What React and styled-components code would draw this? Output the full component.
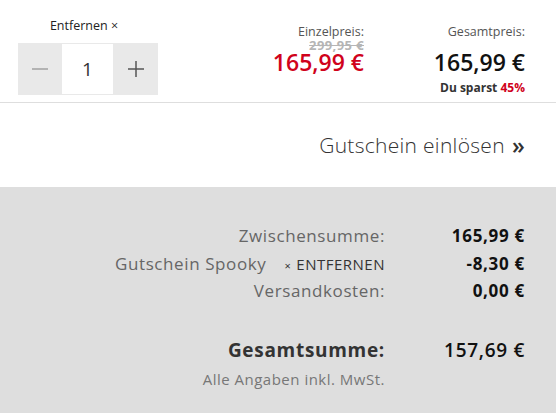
import React from 'react';
import styled, { createGlobalStyle } from 'styled-components';

const GlobalStyle = createGlobalStyle`
  body {
    margin: 0;
    background: #fff;
    font-family: "Open Sans", "Noto Sans", sans-serif;
    color: #333;
  }
`;

const Page = styled.div`
  width: 556px;
  height: 413px;
  overflow: hidden;
  display: flex;
  flex-direction: column;
`;

const ItemRow = styled.div`
  display: flex;
  align-items: flex-start;
  height: 103px;
  box-sizing: border-box;
  border-bottom: 1px solid #dedede;
  padding: 0 31px 0 18px;
`;

const QtyBlock = styled.div`
  display: flex;
  flex-direction: column;
  align-items: center;
  width: 140px;
  padding-top: 16px;
`;

const RemoveLink = styled.span`
  font-size: 12.5px;
  color: #222;
  height: 19px;
  line-height: 19px;
  margin-bottom: 8px;
  margin-left: -8px;
  cursor: pointer;
`;

const Stepper = styled.div`
  display: flex;
  height: 52px;
  width: 140px;
  background: #e9e9e9;
`;

const StepButton = styled.button`
  width: ${({ wide }) => wide}px;
  border: 0;
  background: transparent;
  display: flex;
  align-items: center;
  justify-content: center;
  padding: 0;
  cursor: pointer;
`;

const QtyValue = styled.div`
  flex: 1;
  margin: 1px 0;
  background: #fff;
  display: flex;
  align-items: center;
  justify-content: center;
  font-size: 19px;
  color: #333;
`;

const PriceCol = styled.div`
  display: flex;
  flex-direction: column;
  align-items: flex-end;
  margin-left: auto;
  padding-top: 25px;
`;

const TotalCol = styled(PriceCol)`
  margin-left: 0;
  width: 161px;
`;

const ColLabel = styled.span`
  font-size: 12.5px;
  color: #555;
  line-height: 14px;
`;

const OldPrice = styled.span`
  font-size: 13px;
  font-weight: 700;
  letter-spacing: 0.4px;
  color: #b5b5b5;
  text-decoration: line-through;
  line-height: 12px;
`;

const BigPrice = styled.span`
  font-size: 23px;
  font-weight: 600;
  color: ${({ red }) => (red ? '#d0021b' : '#111')};
  line-height: 22px;
  margin-top: ${({ gap }) => gap}px;
`;

const Savings = styled.span`
  font-size: 12px;
  font-weight: 700;
  color: #333;
  line-height: 16px;
  margin-top: 7px;

  em {
    font-style: normal;
    color: #d0021b;
  }
`;

const CouponRow = styled.div`
  height: 84px;
  display: flex;
  align-items: center;
  justify-content: flex-end;
  padding: 0 31px 0 0;
  font-size: 21px;
  font-weight: 300;
  letter-spacing: 0.3px;
  color: #333;
`;

const Chevrons = styled.span`
  font-weight: 600;
  font-size: 23px;
  margin-left: 7px;
`;

const Summary = styled.div`
  flex: 1;
  background: #dedede;
  padding: 35px 31px 0 0;
`;

const Grid = styled.div`
  display: grid;
  grid-template-columns: 1fr 140px;
  grid-auto-rows: 27.5px;
  align-items: center;
`;

const Label = styled.div`
  display: flex;
  justify-content: ${({ split }) => (split ? 'space-between' : 'flex-end')};
  align-items: baseline;
  padding-left: ${({ split }) => (split ? '115px' : 0)};
  font-size: 17px;
  letter-spacing: 0.6px;
  color: #666;
  white-space: nowrap;
`;

const RemoveCoupon = styled.span`
  font-size: 15px;
  letter-spacing: 0.5px;
  color: #333;
  cursor: pointer;

  small {
    font-size: 11px;
    margin-right: 5px;
  }
`;

const Value = styled.div`
  text-align: right;
  font-size: 17px;
  font-weight: 700;
  letter-spacing: 0.7px;
  color: #111;
`;

const TotalGrid = styled(Grid)`
  margin-top: 31px;
  grid-auto-rows: 29px;
`;

const TotalLabel = styled.div`
  text-align: right;
  font-size: 19px;
  font-weight: 700;
  letter-spacing: 0.7px;
  color: #333;
`;

const TotalValue = styled.div`
  text-align: right;
  font-size: 19px;
  font-weight: 600;
  letter-spacing: 0.7px;
  color: #111;
`;

const Note = styled.div`
  text-align: right;
  font-size: 15px;
  letter-spacing: 0.5px;
  color: #777;
  white-space: nowrap;
`;

const Minus = () => (
  <svg width="18" height="18" viewBox="0 0 18 18">
    <path d="M1 9h16" stroke="#b3b3b3" strokeWidth="2" />
  </svg>
);

const Plus = () => (
  <svg width="18" height="18" viewBox="0 0 18 18">
    <path d="M1 9h16M9 1v16" stroke="#555" strokeWidth="1.5" />
  </svg>
);

export default function App() {
  return (
    <Page>
      <GlobalStyle />
      <ItemRow>
        <QtyBlock>
          <RemoveLink>Entfernen ×</RemoveLink>
          <Stepper>
            <StepButton wide={44} aria-label="weniger"><Minus /></StepButton>
            <QtyValue>1</QtyValue>
            <StepButton wide={45} aria-label="mehr"><Plus /></StepButton>
          </Stepper>
        </QtyBlock>
        <PriceCol>
          <ColLabel>Einzelpreis:</ColLabel>
          <OldPrice>299,95 €</OldPrice>
          <BigPrice red gap={0}>165,99 €</BigPrice>
        </PriceCol>
        <TotalCol>
          <ColLabel>Gesamtpreis:</ColLabel>
          <BigPrice gap={12}>165,99 €</BigPrice>
          <Savings>Du sparst <em>45%</em></Savings>
        </TotalCol>
      </ItemRow>
      <CouponRow>
        Gutschein einlösen<Chevrons>»</Chevrons>
      </CouponRow>
      <Summary>
        <Grid>
          <Label>Zwischensumme:</Label>
          <Value>165,99 €</Value>
          <Label split>
            <span>Gutschein Spooky</span>
            <RemoveCoupon><small>×</small>ENTFERNEN</RemoveCoupon>
          </Label>
          <Value>-8,30 €</Value>
          <Label>Versandkosten:</Label>
          <Value>0,00 €</Value>
        </Grid>
        <TotalGrid>
          <TotalLabel>Gesamtsumme:</TotalLabel>
          <TotalValue>157,69 €</TotalValue>
          <Note>Alle Angaben inkl. MwSt.</Note>
        </TotalGrid>
      </Summary>
    </Page>
  );
}
